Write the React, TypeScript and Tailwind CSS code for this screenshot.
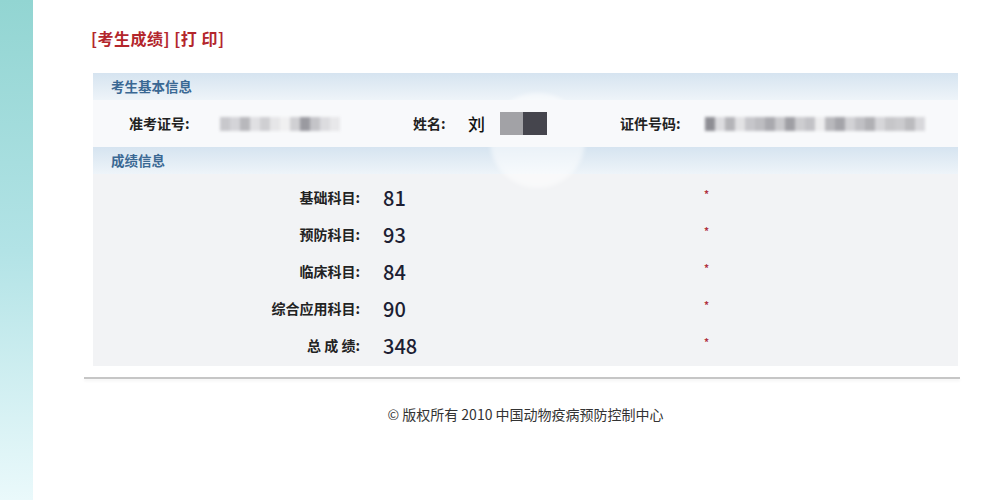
import React from "react";

const font = { fontFamily: '"Noto Sans CJK SC", "Noto Sans", sans-serif' };

const scores = [
  { label: "基础科目:", value: "81" },
  { label: "预防科目:", value: "93" },
  { label: "临床科目:", value: "84" },
  { label: "综合应用科目:", value: "90" },
  { label: "总 成 绩:", value: "348" },
];

function Mosaic({ cells }: { cells: string[] }) {
  return (
    <div className="flex h-[14px] items-stretch blur-[1.5px]">
      {cells.map((c, i) => (
        <div key={i} className="w-[10px]" style={{ background: c }} />
      ))}
    </div>
  );
}

function SectionHeader({ title }: { title: string }) {
  return (
    <div className="flex h-[27px] items-center bg-gradient-to-b from-[#d6e4f0] to-[#eef4f9] pl-[18px] text-[13.5px] font-bold text-[#3a6893]">
      {title}
    </div>
  );
}

export default function App() {
  return (
    <div className="flex h-[500px] w-[987px] overflow-hidden bg-white" style={font}>
      <div className="w-[33px] shrink-0 bg-gradient-to-b from-[#92d5d2] via-[#b2e3e6] to-[#eaf9fb]" />
      <div className="flex flex-1 flex-col">
        <div className="pl-[58px] pt-[27px] text-[16px] font-bold leading-[22px] tracking-[0.5px] text-[#b3262c]">
          [考生成绩] [打 印]
        </div>

        <div className="relative ml-[60px] mt-[24px] w-[865px]">
          <div className="pointer-events-none absolute left-[397px] top-[20px] h-[95px] w-[95px] rounded-full bg-white/50 blur-[2px]" />
          <SectionHeader title="考生基本信息" />
          <div className="relative flex h-[47px] items-center bg-[#f8f9fb] text-[14px] font-bold text-[#222]">
            <div className="w-[127px] pl-[36px]">准考证号:</div>
            <Mosaic cells={["#c8c8cc", "#d4d4d8", "#b8b8bc", "#e0e0e3", "#cfcfd2", "#e6e6e8", "#f0f0f1", "#d0d0d3", "#9a9aa0", "#c4c4c8", "#dcdcdf", "#e8e8ea"]} />
            <div className="ml-[73px] w-[55px]">姓名:</div>
            <div className="text-[17px] font-medium text-[#111]">刘</div>
            <div className="relative z-10 ml-[15px] flex h-[23px]">
              <div className="w-[23px] bg-[#a2a2a6]" />
              <div className="w-[24px] bg-[#45454d]" />
            </div>
            <div className="ml-[73px] w-[85px]">证件号码:</div>
            <Mosaic cells={["#8e8e94", "#dcdcdf", "#b4b4b8", "#e2e2e4", "#c6c6ca", "#bdbdc1", "#a9a9ae", "#c9c9cc", "#9f9fa4", "#cdcdd0", "#c2c2c6", "#ededee", "#b8b8bc", "#a4a4a9", "#d2d2d5", "#c0c0c4", "#b0b0b4", "#d6d6d9", "#c6c6c9", "#cbcbce", "#bbbbbe", "#d8d8db"]} />
          </div>
          <SectionHeader title="成绩信息" />
          <div className="bg-[#f2f3f5] pb-[2px] pt-[5px]">
            {scores.map((s) => (
              <div key={s.label} className="flex h-[37px] items-center">
                <div className="w-[267px] text-right text-[14px] font-bold text-[#222]">{s.label}</div>
                <div className="w-[344px] pl-[23px] text-[20px] font-medium text-[#1d1e33]">{s.value}</div>
                <div className="-mt-[8px] text-[10px] font-bold text-[#b03040]">*</div>
              </div>
            ))}
          </div>
        </div>

        <div className="ml-[51px] mt-[11px] h-[2px] w-[876px] bg-[#c6c6c6] shadow-[0_2px_3px_rgba(0,0,0,0.06)]" />

        <div className="ml-[60px] mt-[25px] w-[865px] text-center text-[14px] text-[#333]">
          © 版权所有 2010 中国动物疫病预防控制中心
        </div>
      </div>
    </div>
  );
}
